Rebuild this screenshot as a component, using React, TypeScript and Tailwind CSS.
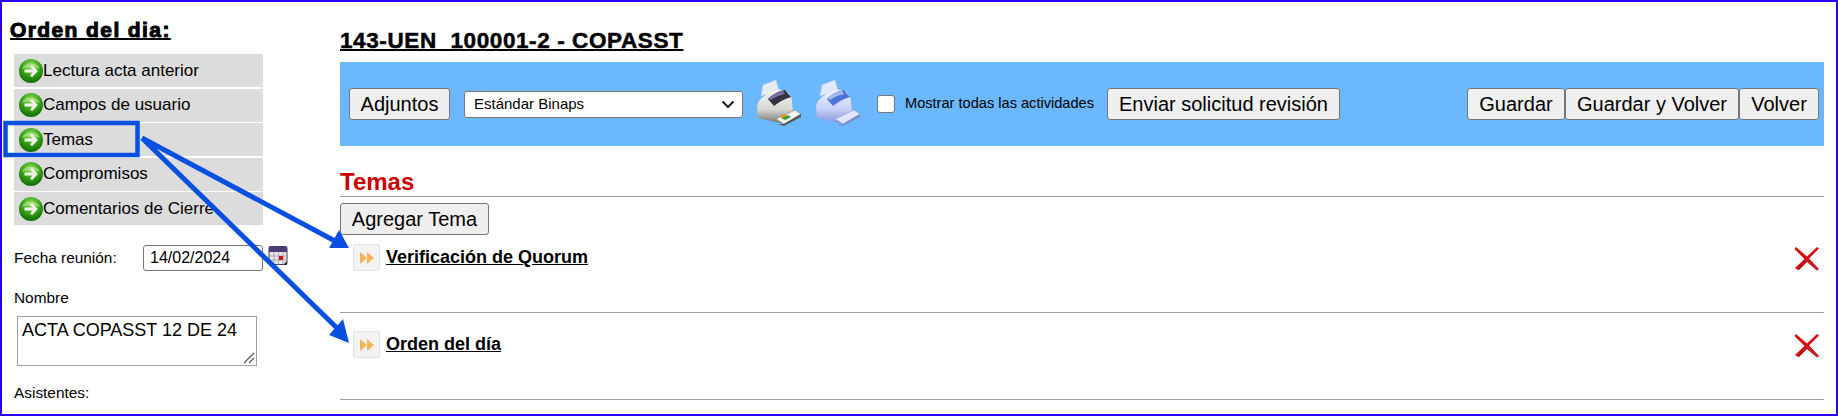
function GreenArrow() {
  return (
    <svg width="24" height="24" viewBox="0 0 24 24" className="shrink-0">
      <defs>
        <radialGradient id="ga" cx="50%" cy="30%" r="75%">
          <stop offset="0%" stopColor="#9fe06a" />
          <stop offset="50%" stopColor="#36a316" />
          <stop offset="100%" stopColor="#0a6204" />
        </radialGradient>
      </defs>
      <circle cx="12" cy="12" r="12" fill="url(#ga)" />
      <path d="M3 10a9.500 8 0 0 1 18 0c-5-2.500-13-2.500-18 0z" fill="#c6f0a0" opacity="0.55" />
      <path d="M5.500 12h11M12 6.800l5 5.200-5 5.200" fill="none" stroke="#eef5e6" strokeWidth="2.800" />
    </svg>
  )
}

function CalendarIcon() {
  return (
    <svg width="20" height="20" viewBox="0 0 20 20" className="shrink-0">
      <rect x="1" y="0.500" width="18" height="18" rx="1.500" fill="#e8e8e8" stroke="#3c3c44" />
      <rect x="1" y="0.500" width="18" height="5.500" fill="#4c3d78" />
      <path d="M1 10h18M1 14h18M6 6v12.500M10.500 6v12.500M15 6v12.500" stroke="#a8a8ac" strokeWidth="1" />
      <rect x="11" y="10" width="4" height="4" fill="#d01020" />
      <path d="M15 19l4-4v4z" fill="#333" />
    </svg>
  )
}

function PrinterIcon({ blue = false }: { blue?: boolean }) {
  const id = blue ? 'pb' : 'pg'
  return (
    <svg width="47" height="50" viewBox="0 0 47 50" className="shrink-0 blur-[0.4px]">
      <defs>
        <linearGradient id={id} x1="0" y1="0" x2="0" y2="1">
          <stop offset="0%" stopColor={blue ? '#f0f3ff' : '#f7f7f4'} />
          <stop offset="60%" stopColor={blue ? '#c5cef6' : '#d4d4d0'} />
          <stop offset="100%" stopColor={blue ? '#8694d8' : '#77776f'} />
        </linearGradient>
      </defs>
      <path d="M5 17L7 6l13-5 3 11z" fill={blue ? '#e2e8fb' : '#e9ecef'} stroke="#c3cde0" strokeWidth="0.500" />
      <path d="M1 27c1-7 11-14 21-16 8-1 13 4 14 11l1 13-12 9-23-5z" fill={`url(#${id})`} />
      <path d="M12 20c4-4 10-8 17-9l6 7c-7 2-12 5-17 9z" fill={blue ? '#4f73d8' : '#33323f'} />
      <path d="M13 19c4-3 9-6 14-7l2 3c-5 1-10 3-14 6z" fill={blue ? '#a9baf1' : '#7c6fb0'} />
      <path d="M20 40l19-9 6 4-17 10z" fill={blue ? '#dfe6fb' : '#f2f2ea'} stroke={blue ? '#8d9bd5' : '#888'} strokeWidth="0.600" />
      {!blue && <path d="M25 39l7-3 3 2-6 3z" fill="#3f9d36" />}
      {!blue && <path d="M24 37l5-2 1 2-4 2z" fill="#e58a1e" />}
      <path d="M22 45l6 2 17-9v-3l-17 10z" fill={blue ? '#7d8cc5' : '#555'} />
    </svg>
  )
}

function RedX() {
  return (
    <svg width="26" height="25" viewBox="0 0 26 25" className="shrink-0">
      <path d="M2 1l11 9.500L23 1l2 1.500-10 10 10 10.500-1 1-11-9.500L4 24l-3-2 9.500-9L0.500 3z" fill="#d80d0d" />
      <path d="M4 23l9-8.500 11 9.500-1 .5-10-8.500L5 24z" fill="#a00808" />
    </svg>
  )
}

function TemaRow({ title, height }: { title: string; height: string }) {
  return (
    <div className={`flex justify-between border-b border-[#a0a0a0] pl-[13px] pr-[4px] ${height}`}>
      <div className="flex items-start gap-[6px]">
        <span className="flex h-[27px] w-[27px] items-center justify-center rounded-[2px] border border-[#e2e2e2] bg-[#f3f3f3]">
          <svg width="14" height="12" viewBox="0 0 14 12">
            <path d="M0 0l7 6-7 6zM7 0l7 6-7 6z" fill="#f0b45a" />
          </svg>
        </span>
        <a className="mt-[3px] text-[18px] font-bold leading-[21px] text-black underline">{title}</a>
      </div>
      <div className="mt-[2px]">
        <RedX />
      </div>
    </div>
  )
}

const btn =
  'h-[32px] rounded-[3px] border border-[#767676] bg-[#efefef] text-[20px] leading-none text-black'

export default function App() {
  const menu = ['Lectura acta anterior', 'Campos de usuario', 'Temas', 'Compromisos', 'Comentarios de Cierre']
  return (
    <div className="relative flex h-[416px] w-[1838px] overflow-hidden border-2 border-[#2a00f0] bg-white font-['Liberation_Sans',Arial,sans-serif] text-black">
      {/* Left column */}
      <aside className="w-[338px] shrink-0 pl-[8px] pt-[16px]">
        <h2 className="text-[21px] font-bold leading-[24px] tracking-[1.4px] underline decoration-2 [-webkit-text-stroke:1px_black]">
          Orden del dia:
        </h2>
        <ul className="ml-[4px] mt-[12px] flex w-[249px] flex-col gap-[1.500px]">
          {menu.map((item) => (
            <li key={item} className="flex h-[33px] items-center bg-[#dcdcdc] pl-[5px] text-[17px]">
              <GreenArrow />
              {item}
            </li>
          ))}
        </ul>
        <div className="ml-[4px] mt-[20px] flex items-center">
          <span className="w-[129px] text-[15.400px]">Fecha reunión:</span>
          <input
            readOnly
            value="14/02/2024"
            className="h-[26px] w-[120px] rounded-[3px] border border-[#767676] px-[6px] text-[16px]"
          />
          <span className="mb-[5px] ml-[5px]">
            <CalendarIcon />
          </span>
        </div>
        <p className="ml-[4px] mt-[18px] text-[15.400px] leading-[17px]">Nombre</p>
        <div className="relative ml-[7px] mt-[10px] h-[50px] w-[240px] border border-[#a0a0a0] px-[4px] pt-[3px] text-[18px] leading-[21px]">
          ACTA COPASST 12 DE 24
          <svg width="12" height="12" viewBox="0 0 12 12" className="absolute bottom-[1px] right-[1px]">
            <path d="M1 11L11 1M6 11l5-5" stroke="#555" strokeWidth="1.200" />
          </svg>
        </div>
        <p className="ml-[4px] mt-[18px] text-[15.400px] leading-[17px]">Asistentes:</p>
      </aside>

      {/* Main column */}
      <main className="w-[1484px] shrink-0 pt-[27px]">
        <h1 className="whitespace-pre text-[22.500px] font-bold leading-[23px] tracking-[0.6px] underline decoration-2 [-webkit-text-stroke:0.5px_black]">
          143-UEN  100001-2 - COPASST
        </h1>
        <div className="mt-[10px] flex h-[84px] items-center bg-[#6bb8ff] pl-[9px] pr-[5px]">
          <button className={`${btn} w-[101px]`}>Adjuntos</button>
          <div className="relative ml-[14px] flex h-[27px] w-[279px] items-center rounded-[3px] border border-[#767676] bg-white pl-[9px] text-[15px]">
            Estándar Binaps
            <svg width="14" height="9" viewBox="0 0 14 9" className="absolute right-[7px] top-[8px]">
              <path d="M1.500 1.500L7 7l5.500-5.500" fill="none" stroke="#111" strokeWidth="2" />
            </svg>
          </div>
          <div className="ml-[13px]">
            <PrinterIcon />
          </div>
          <div className="ml-[12px]">
            <PrinterIcon blue />
          </div>
          <span className="ml-[15px] h-[18px] w-[18px] rounded-[3px] border border-[#767676] bg-white" />
          <span className="ml-[10px] text-[14.600px]">Mostrar todas las actividades</span>
          <button className={`${btn} ml-[13px] w-[233px]`}>Enviar solicitud revisión</button>
          <div className="ml-auto flex">
            <button className={`${btn} w-[98px]`}>Guardar</button>
            <button className={`${btn} w-[174px]`}>Guardar y Volver</button>
            <button className={`${btn} w-[80px]`}>Volver</button>
          </div>
        </div>
        <h3 className="mt-[22px] text-[24px] font-bold leading-[27px] text-[#cc0000]">Temas</h3>
        <div className="mt-[1px] w-full border-t border-[#a0a0a0] pt-[6px]">
          <button className={`${btn} w-[149px]`}>Agregar Tema</button>
          <div className="mt-[9px]">
            <TemaRow title="Verificación de Quorum" height="h-[69px]" />
            <div className="pt-[18px]">
              <TemaRow title="Orden del día" height="h-[69px]" />
            </div>
          </div>
        </div>
      </main>

      {/* Annotation arrows over the page */}
      <svg width="1838" height="416" viewBox="0 0 1838 416" className="pointer-events-none absolute left-[-2px] top-[-2px]">
        <rect x="5.500" y="123" width="132" height="32" fill="none" stroke="#0a50e0" strokeWidth="4.500" />
        <path d="M142 138L335 241M142 138L338 329" stroke="#0a50e0" strokeWidth="5" fill="none" />
        <path d="M349 248L329 248L339 230z" fill="#0a50e0" />
        <path d="M349 343L329 335L343 319z" fill="#0a50e0" />
      </svg>
    </div>
  )
}
